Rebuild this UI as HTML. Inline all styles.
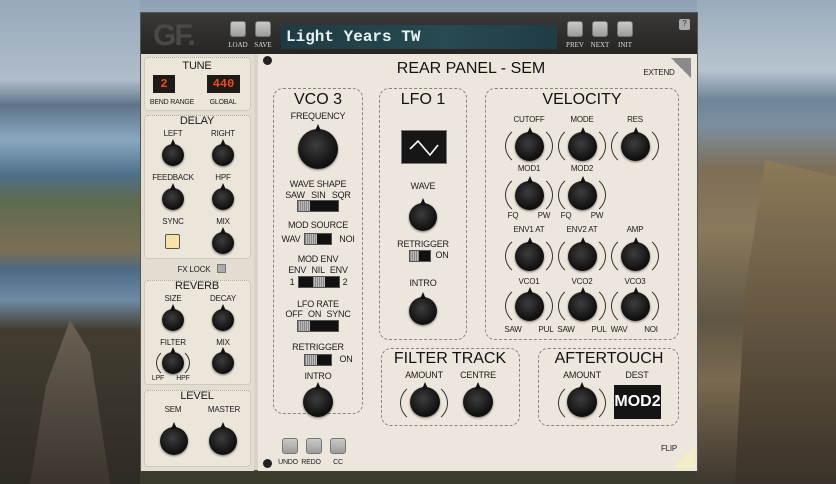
<!DOCTYPE html>
<html><head><meta charset="utf-8"><style>
*{margin:0;padding:0;box-sizing:border-box}
body{width:836px;height:484px;overflow:hidden;position:relative;font-family:"Liberation Sans",sans-serif;
background:linear-gradient(180deg,#8ea2b6 0px,#a8b6c4 60px,#6c7f93 110px,#7f95a8 140px,#556a52 300px,#3b3a2c 484px);}
.bgL{position:absolute;left:0;top:0;width:140px;height:484px;
background:linear-gradient(180deg,#97a9bb 0,#b0bdca 80px,#5e7389 105px,#89a8c0 140px,#4e6f8a 175px,#5d6b4f 200px,#7c6f55 250px,#4d6a86 270px,#6e8aa4 300px,#433d30 330px,#2e2b25 484px)}
.bgL2{position:absolute;left:30px;top:320px;width:80px;height:164px;background:linear-gradient(180deg,#6b6154,#3b352d);clip-path:polygon(50% 0,75% 20%,100% 100%,0 100%,20% 40%)}
.bgR{position:absolute;left:697px;top:0;width:139px;height:484px;
background:linear-gradient(180deg,#9aacbc 0,#b7c3cf 70px,#6f8499 100px,#7b8fa0 125px,#7d6e56 170px,#8a7a5c 230px,#5f5644 320px,#7a6a50 380px,#3d382e 484px)}
.bgR2{position:absolute;left:735px;top:160px;width:101px;height:324px;background:linear-gradient(180deg,#8c7a58,#5b4e3c 60%,#3a3329);clip-path:polygon(30% 0,100% 5%,100% 100%,0 100%,10% 40%)}
.plug{position:absolute;left:140px;top:12px;width:558px;height:459px;background:#d9d3c8;border:1px solid #555}
.top{position:absolute;left:0;top:0;width:556px;height:41px;background:linear-gradient(#3a3937,#262523);}
.a{position:absolute}
.t{position:absolute;color:#1c1c1c;font-size:8px;white-space:nowrap;transform:translateX(-50%);text-transform:uppercase;letter-spacing:-0.2px}
.h{position:absolute;color:#111;font-size:16px;white-space:nowrap;transform:translateX(-50%)}
.btn{position:absolute;width:16px;height:16px;border-radius:3px;background:linear-gradient(#c9c9c7,#9c9c9a);border:1px solid #777}
.bl{position:absolute;color:#ddd;font-size:7px;transform:translateX(-50%);font-family:"Liberation Serif",serif}
.box{position:absolute;border:1px dashed #8a857d;border-radius:10px}
.lbox{position:absolute;background:#ebe5da;border:1px dotted #b5aea3;border-radius:4px}
.k{position:absolute;border-radius:50%;background:radial-gradient(circle at 45% 40%,#3d3d3d,#111 65%,#050505);box-shadow:0 1px 2px rgba(0,0,0,.5)}
.k::after{content:"";position:absolute;left:50%;top:-5px;margin-left:-3px;border-left:3px solid transparent;border-right:3px solid transparent;border-bottom:7px solid #111}
.arc{position:absolute;border-left:1.5px solid #333;border-right:1.5px solid #333;border-top:1.5px solid transparent;border-bottom:1.5px solid transparent;border-radius:50%}
.sw{position:absolute;height:12px;background:#111;border:1px solid #555}
.th{position:absolute;top:0;height:10px;width:12px;background:repeating-linear-gradient(90deg,#888 0 1px,#bbb 1px 2px)}
.led{position:absolute;background:#1e1a18;color:#f04a1a;font-weight:bold;font-size:12px;text-align:center;line-height:18px;font-family:"Liberation Mono",monospace}
</style></head><body>
<div class="bgL"></div><div class="bgL2"></div><div class="bgR"></div><div class="bgR2"></div>
<div class="plug">
 <div class="top">
  <div class="a" style="left:12px;top:6px;font-size:30px;font-weight:bold;color:#4a4947;letter-spacing:-2px">GF.</div>
  <div class="btn" style="left:89px;top:8px"></div><div class="bl" style="left:97px;top:28px">LOAD</div>
  <div class="btn" style="left:114px;top:8px"></div><div class="bl" style="left:122px;top:28px">SAVE</div>
  <div class="a" style="left:140px;top:12px;width:276px;height:24px;background:linear-gradient(90deg,#1f3a42,#284a52 60%,#203c44);"></div>
  <div class="a" style="left:145px;top:15px;color:#e8f0f0;font-size:16px;font-family:'Liberation Mono',monospace;font-weight:bold">Light Years TW</div>
  <div class="btn" style="left:426px;top:8px"></div><div class="bl" style="left:434px;top:28px">PREV</div>
  <div class="btn" style="left:451px;top:8px"></div><div class="bl" style="left:459px;top:28px">NEXT</div>
  <div class="btn" style="left:476px;top:8px"></div><div class="bl" style="left:484px;top:28px">INIT</div>
  <div class="a" style="left:538px;top:6px;width:11px;height:11px;background:#aaa;border-radius:2px;font-size:8px;text-align:center;color:#333">?</div>
 </div>
 <div class="a" style="left:0;top:41px;width:113px;height:417px;background:#e2dcd1"></div>
 <div class="lbox" style="left:3px;top:44px;width:107px;height:54px"></div>
 <div class="t" style="left:56px;top:47px;font-size:11px">TUNE</div>
 <div class="led" style="left:12px;top:62px;width:22px">2</div>
 <div class="led" style="left:66px;top:62px;width:33px">440</div>
 <div class="t" style="left:31px;top:86px;font-size:7px">BEND RANGE</div>
 <div class="t" style="left:82px;top:86px;font-size:7px">GLOBAL</div>
 <div class="lbox" style="left:3px;top:102px;width:107px;height:144px"></div>
 <div class="t" style="left:56px;top:102px;font-size:11px">DELAY</div>
 <div class="t" style="left:32px;top:116px">LEFT</div><div class="t" style="left:82px;top:116px">RIGHT</div>
 <div class="k" style="left:21px;top:131px;width:22px;height:22px"></div>
 <div class="k" style="left:71px;top:131px;width:22px;height:22px"></div>
 <div class="t" style="left:32px;top:160px">FEEDBACK</div><div class="t" style="left:82px;top:160px">HPF</div>
 <div class="k" style="left:21px;top:175px;width:22px;height:22px"></div>
 <div class="k" style="left:71px;top:175px;width:22px;height:22px"></div>
 <div class="t" style="left:32px;top:204px">SYNC</div><div class="t" style="left:82px;top:204px">MIX</div>
 <div class="a" style="left:24px;top:221px;width:15px;height:15px;background:#f7e3a6;border:1px solid #555;border-radius:2px"></div>
 <div class="k" style="left:71px;top:219px;width:22px;height:22px"></div>
 <div class="t" style="left:53px;top:252px">FX LOCK</div>
 <div class="a" style="left:76px;top:251px;width:9px;height:9px;background:#aaa;border:1px solid #777"></div>
 <div class="lbox" style="left:3px;top:267px;width:107px;height:105px"></div>
 <div class="t" style="left:56px;top:267px;font-size:11px">REVERB</div>
 <div class="t" style="left:32px;top:281px">SIZE</div><div class="t" style="left:82px;top:281px">DECAY</div>
 <div class="k" style="left:21px;top:296px;width:22px;height:22px"></div>
 <div class="k" style="left:71px;top:296px;width:22px;height:22px"></div>
 <div class="t" style="left:32px;top:325px">FILTER</div><div class="t" style="left:82px;top:325px">MIX</div>
 <div class="arc" style="left:15px;top:335px;width:34px;height:30px"></div>
 <div class="k" style="left:21px;top:339px;width:22px;height:22px"></div>
 <div class="k" style="left:71px;top:339px;width:22px;height:22px"></div>
 <div class="t" style="left:17px;top:362px;font-size:7px">LPF</div><div class="t" style="left:42px;top:362px;font-size:7px">HPF</div>
 <div class="lbox" style="left:3px;top:377px;width:107px;height:77px"></div>
 <div class="t" style="left:56px;top:377px;font-size:11px">LEVEL</div>
 <div class="t" style="left:32px;top:392px">SEM</div><div class="t" style="left:83px;top:392px">MASTER</div>
 <div class="k" style="left:19px;top:414px;width:28px;height:28px"></div>
 <div class="k" style="left:68px;top:414px;width:28px;height:28px"></div>
 <div class="a" style="left:117px;top:41px;width:439px;height:417px;background:#ece6dc"></div>
 <div class="a" style="left:122px;top:43px;width:9px;height:9px;border-radius:50%;background:#222"></div>
 <div class="h" style="left:330px;top:47px">REAR PANEL - SEM</div>
 <div class="t" style="left:518px;top:55px;font-size:8px">EXTEND</div>
 <div class="a" style="left:530px;top:45px;width:20px;height:20px;background:linear-gradient(225deg,#8a8a8a 50%,transparent 50%)"></div>
 <div class="box" style="left:132px;top:75px;width:90px;height:326px"></div>
 <div class="h" style="left:177px;top:78px">VCO 3</div>
 <div class="t" style="left:177px;top:98px;font-size:9px">FREQUENCY</div>
 <div class="k" style="left:157px;top:116px;width:40px;height:40px"></div>
 <div class="t" style="left:177px;top:166px;font-size:9px">WAVE SHAPE</div>
 <div class="t" style="left:177px;top:177px;font-size:9px;word-spacing:4px">SAW SIN SQR</div>
 <div class="sw" style="left:156px;top:187px;width:42px"><div class="th" style="left:0"></div></div>
 <div class="t" style="left:177px;top:207px;font-size:9px">MOD SOURCE</div>
 <div class="t" style="left:150px;top:221px;font-size:9px">WAV</div><div class="t" style="left:206px;top:221px;font-size:9px">NOI</div>
 <div class="sw" style="left:163px;top:220px;width:28px"><div class="th" style="left:0"></div></div>
 <div class="t" style="left:177px;top:241px;font-size:9px">MOD ENV</div>
 <div class="t" style="left:177px;top:252px;font-size:9px;word-spacing:3px">ENV NIL ENV</div>
 <div class="t" style="left:151px;top:264px;font-size:9px">1</div><div class="t" style="left:204px;top:264px;font-size:9px">2</div>
 <div class="sw" style="left:157px;top:263px;width:42px"><div class="th" style="left:14px"></div></div>
 <div class="t" style="left:177px;top:286px;font-size:9px">LFO RATE</div>
 <div class="t" style="left:177px;top:296px;font-size:9px;word-spacing:3px">OFF ON SYNC</div>
 <div class="sw" style="left:156px;top:307px;width:42px"><div class="th" style="left:0"></div></div>
 <div class="t" style="left:177px;top:329px;font-size:9px">RETRIGGER</div>
 <div class="sw" style="left:163px;top:341px;width:28px"><div class="th" style="left:0"></div></div>
 <div class="t" style="left:205px;top:341px;font-size:9px">ON</div>
 <div class="t" style="left:177px;top:358px;font-size:9px">INTRO</div>
 <div class="k" style="left:162px;top:374px;width:30px;height:30px"></div>
 <div class="box" style="left:238px;top:75px;width:88px;height:252px"></div>
 <div class="h" style="left:282px;top:78px">LFO 1</div>
 <div class="a" style="left:260px;top:117px;width:46px;height:34px;background:#161616;border:1px solid #777"><svg width="44" height="32"><polyline points="8,18 16,10 28,24 36,14" fill="none" stroke="#fff" stroke-width="1.6"/></svg></div>
 <div class="t" style="left:282px;top:168px;font-size:9px">WAVE</div>
 <div class="k" style="left:268px;top:190px;width:28px;height:28px"></div>
 <div class="t" style="left:282px;top:226px;font-size:9px">RETRIGGER</div>
 <div class="sw" style="left:268px;top:237px;width:22px"><div class="th" style="left:0;width:9px"></div></div>
 <div class="t" style="left:301px;top:237px;font-size:9px">ON</div>
 <div class="t" style="left:282px;top:265px;font-size:9px">INTRO</div>
 <div class="k" style="left:268px;top:284px;width:28px;height:28px"></div>
 <div class="box" style="left:344px;top:75px;width:194px;height:252px"></div>
 <div class="h" style="left:441px;top:78px">VELOCITY</div>
 <div class="t" style="left:388px;top:102px">CUTOFF</div><div class="t" style="left:441px;top:102px">MODE</div><div class="t" style="left:494px;top:102px">RES</div>
 <div class="arc" style="left:364px;top:112px;width:48px;height:42px"></div><div class="arc" style="left:417px;top:112px;width:48px;height:42px"></div><div class="arc" style="left:470px;top:112px;width:48px;height:42px"></div>
 <div class="k" style="left:374px;top:119px;width:29px;height:29px"></div><div class="k" style="left:427px;top:119px;width:29px;height:29px"></div><div class="k" style="left:480px;top:119px;width:29px;height:29px"></div>
 <div class="t" style="left:388px;top:151px">MOD1</div><div class="t" style="left:441px;top:151px">MOD2</div>
 <div class="arc" style="left:364px;top:161px;width:48px;height:42px"></div><div class="arc" style="left:417px;top:161px;width:48px;height:42px"></div>
 <div class="k" style="left:374px;top:168px;width:29px;height:29px"></div><div class="k" style="left:427px;top:168px;width:29px;height:29px"></div>
 <div class="t" style="left:372px;top:198px">FQ</div><div class="t" style="left:403px;top:198px">PW</div><div class="t" style="left:425px;top:198px">FQ</div><div class="t" style="left:456px;top:198px">PW</div>
 <div class="t" style="left:388px;top:212px">ENV1 AT</div><div class="t" style="left:441px;top:212px">ENV2 AT</div><div class="t" style="left:494px;top:212px">AMP</div>
 <div class="arc" style="left:364px;top:222px;width:48px;height:42px"></div><div class="arc" style="left:417px;top:222px;width:48px;height:42px"></div><div class="arc" style="left:470px;top:222px;width:48px;height:42px"></div>
 <div class="k" style="left:374px;top:229px;width:29px;height:29px"></div><div class="k" style="left:427px;top:229px;width:29px;height:29px"></div><div class="k" style="left:480px;top:229px;width:29px;height:29px"></div>
 <div class="t" style="left:388px;top:264px">VCO1</div><div class="t" style="left:441px;top:264px">VCO2</div><div class="t" style="left:494px;top:264px">VCO3</div>
 <div class="arc" style="left:364px;top:272px;width:48px;height:42px"></div><div class="arc" style="left:417px;top:272px;width:48px;height:42px"></div><div class="arc" style="left:470px;top:272px;width:48px;height:42px"></div>
 <div class="k" style="left:374px;top:279px;width:29px;height:29px"></div><div class="k" style="left:427px;top:279px;width:29px;height:29px"></div><div class="k" style="left:480px;top:279px;width:29px;height:29px"></div>
 <div class="t" style="left:372px;top:312px">SAW</div><div class="t" style="left:405px;top:312px">PUL</div><div class="t" style="left:425px;top:312px">SAW</div><div class="t" style="left:458px;top:312px">PUL</div><div class="t" style="left:478px;top:312px">WAV</div><div class="t" style="left:510px;top:312px">NOI</div>
 <div class="box" style="left:240px;top:335px;width:139px;height:78px"></div>
 <div class="h" style="left:309px;top:337px">FILTER TRACK</div>
 <div class="t" style="left:283px;top:357px;font-size:9px">AMOUNT</div><div class="t" style="left:337px;top:357px;font-size:9px">CENTRE</div>
 <div class="arc" style="left:259px;top:369px;width:48px;height:42px"></div>
 <div class="k" style="left:269px;top:374px;width:30px;height:30px"></div>
 <div class="k" style="left:322px;top:374px;width:30px;height:30px"></div>
 <div class="box" style="left:397px;top:335px;width:141px;height:78px"></div>
 <div class="h" style="left:468px;top:337px">AFTERTOUCH</div>
 <div class="t" style="left:441px;top:357px;font-size:9px">AMOUNT</div><div class="t" style="left:496px;top:357px;font-size:9px">DEST</div>
 <div class="arc" style="left:417px;top:369px;width:48px;height:42px"></div>
 <div class="k" style="left:426px;top:374px;width:30px;height:30px"></div>
 <div class="a" style="left:473px;top:372px;width:47px;height:34px;background:#151515;color:#fff;font-weight:bold;font-size:16px;line-height:34px;text-align:center">MOD2</div>
 <div class="a" style="left:122px;top:446px;width:9px;height:9px;border-radius:50%;background:#222"></div>
 <div class="btn" style="left:141px;top:425px"></div><div class="btn" style="left:165px;top:425px"></div><div class="btn" style="left:189px;top:425px"></div>
 <div class="t" style="left:147px;top:446px;font-size:7px">UNDO</div><div class="t" style="left:170px;top:446px;font-size:7px">REDO</div><div class="t" style="left:197px;top:446px;font-size:7px">CC</div>
 <div class="t" style="left:528px;top:431px;font-size:8px">FLIP</div>
 <div class="a" style="left:532px;top:433px;width:22px;height:22px;background:linear-gradient(135deg,transparent 50%,#f3edc8 50%);"></div>
</div>
</body></html>
